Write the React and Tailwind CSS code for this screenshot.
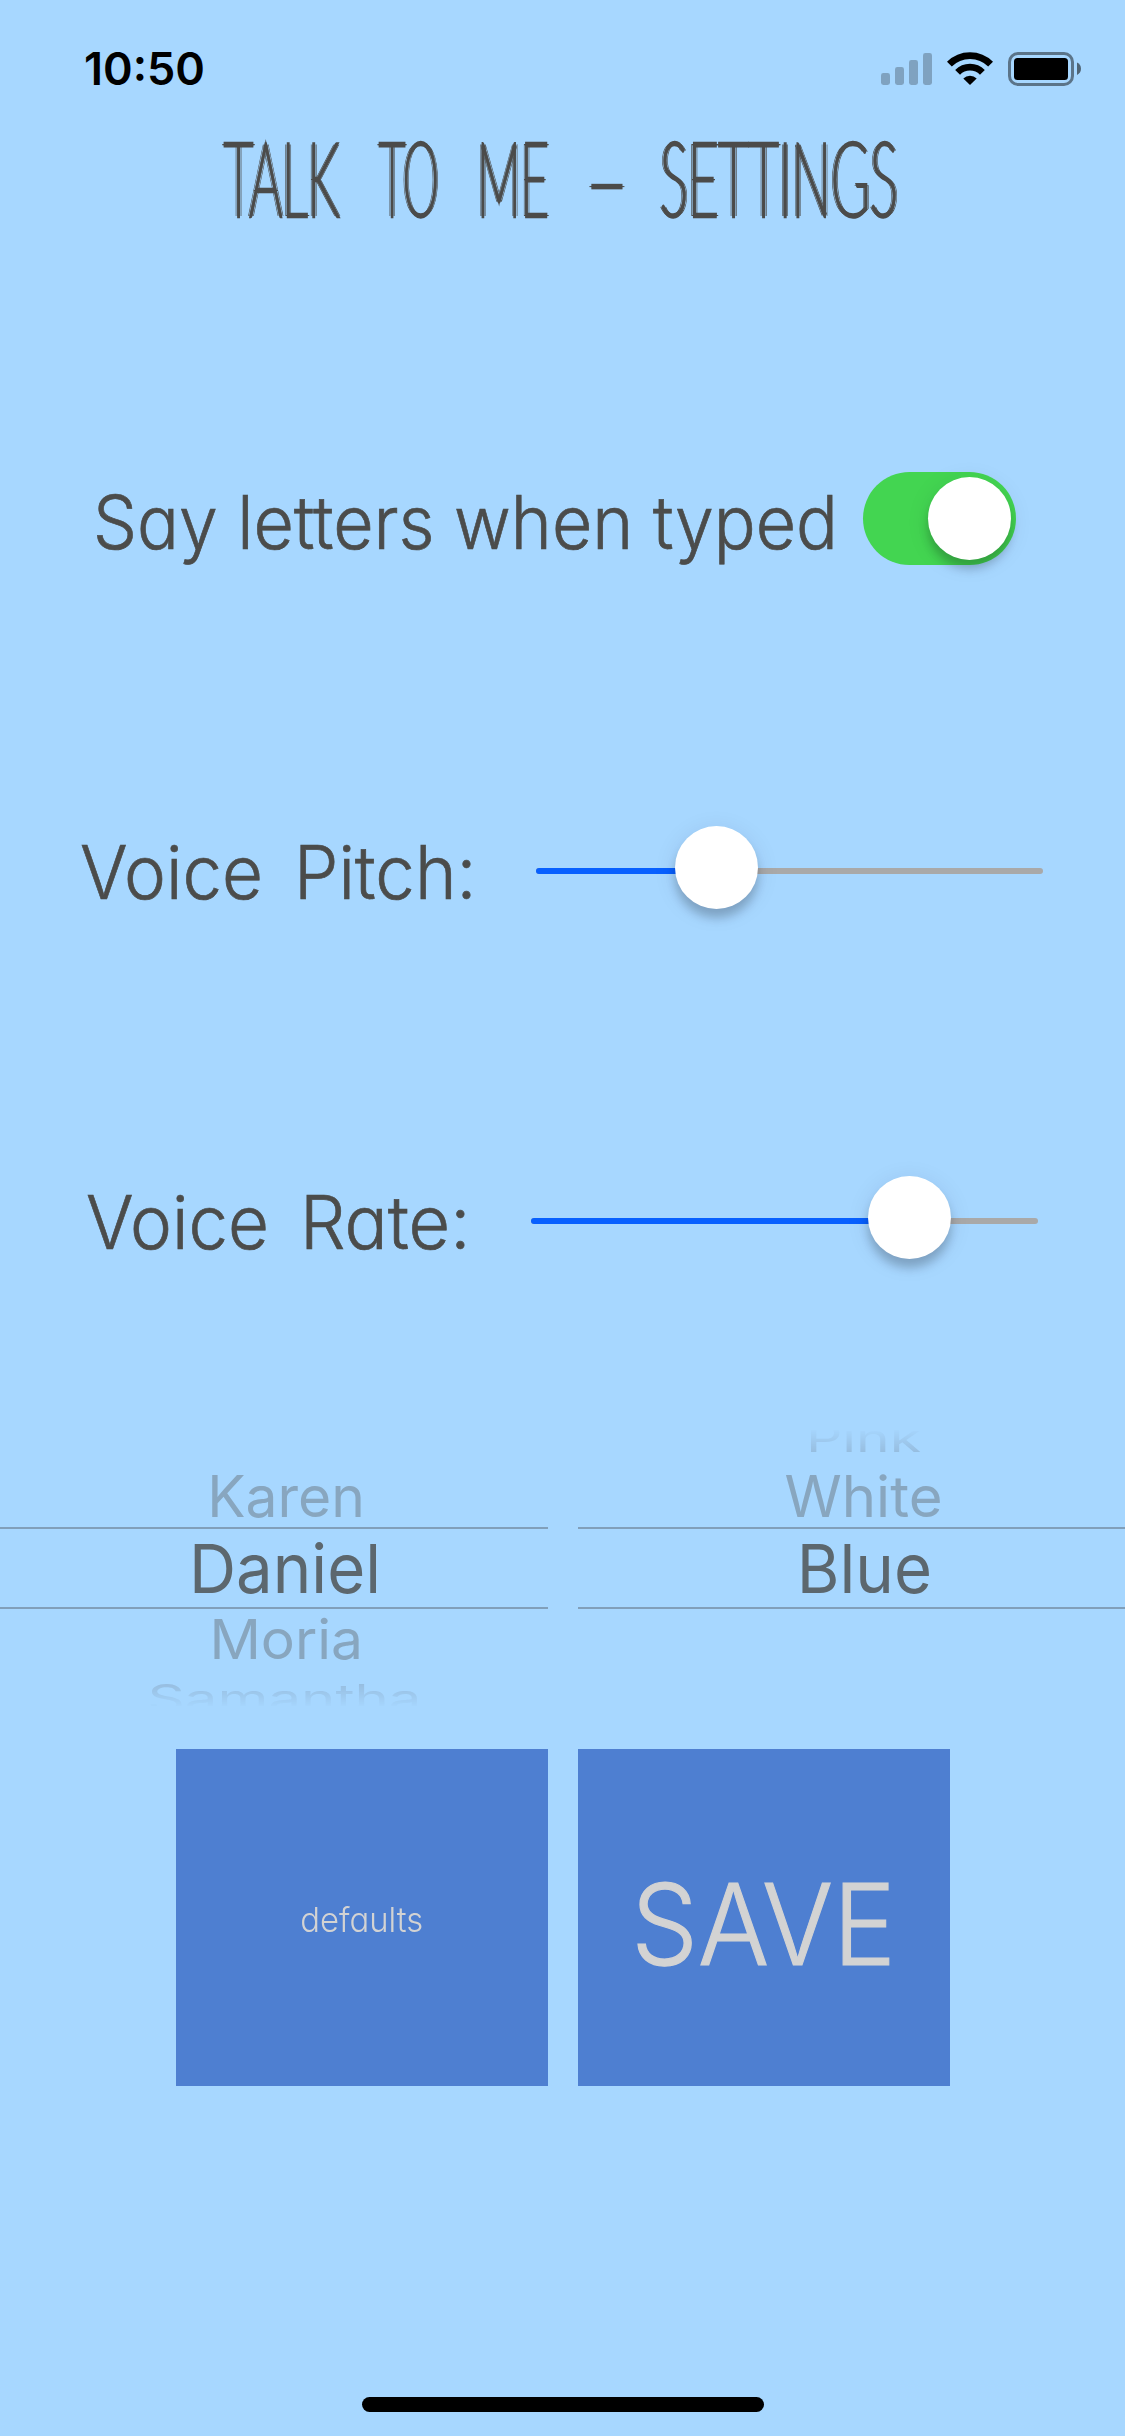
import React from "react";

function StatusBar() {
  return (
    <header className="flex h-[120px] shrink-0 items-start pl-[84px] pr-[44px]">
      <span className="mt-[49px] text-[45px] font-semibold leading-[40px] text-black">10:50</span>
      <div className="ml-auto mt-[52px] flex items-start">
        <svg className="h-[34px] w-[52px]" viewBox="0 0 52 34" fill="#7fa2c0" aria-label="Signal">
          <rect x="0" y="21" width="9" height="12" rx="2.4" />
          <rect x="14" y="15" width="9" height="18" rx="2.4" />
          <rect x="28" y="8" width="9" height="25" rx="2.4" />
          <rect x="42" y="1" width="9" height="32" rx="2.4" />
        </svg>
        <svg className="ml-[14px] h-[34px] w-[46px]" viewBox="0 0 46 34" aria-label="Wi-Fi">
          <g fill="none" stroke="#000" strokeWidth="6.8">
            <path d="M2.4 12.2a29 29 0 0 1 41.2 0" />
            <path d="M10.6 20.3a17.4 17.4 0 0 1 24.8 0" />
          </g>
          <path d="M23 33l-6.700-6.600a9.500 9.500 0 0 1 13.400 0z" fill="#000" />
        </svg>
        <svg className="ml-[15px] h-[34px] w-[73px]" viewBox="0 0 73 34" aria-label="Battery">
          <rect x="1.500" y="1.500" width="63" height="31" rx="8.500" fill="none" stroke="#5b7489" strokeWidth="3" />
          <rect x="6" y="6" width="54" height="22" rx="3.500" fill="#000" />
          <path d="M69 10.500c2.600 1.200 4 3.600 4 6.300s-1.400 5-4 6.200z" fill="#4f6475" />
        </svg>
      </div>
    </header>
  );
}

function Title() {
  const word = "inline-block origin-left whitespace-nowrap";
  return (
    <h1 className="flex h-[120px] shrink-0 items-start pl-[224px] font-['Lato'] text-[103px] font-thin leading-[113px] text-[#4b4b4a] [-webkit-text-stroke:4.5px_#4b4b4a] [stroke-linejoin:round] [text-shadow:-5px_0_#4b4b4a,-2.5px_0_#4b4b4a,2.5px_0_#4b4b4a,5px_0_#4b4b4a]">
      <span className="w-[155px]"><span className={`${word} scale-x-[0.495]`}>TALK</span></span>
      <span className="w-[98px]"><span className={`${word} scale-x-[0.445]`}>TO</span></span>
      <span className="w-[109px]"><span className={`${word} scale-x-[0.475]`}>ME</span></span>
      <span className="w-[74px]"><span className={`${word} scale-x-[0.7]`}>–</span></span>
      <span className="w-[240px]"><span className={`${word} scale-x-[0.512]`}>SETTINGS</span></span>
    </h1>
  );
}

function Knob({ className }) {
  return (
    <span
      className={`absolute h-[83px] w-[83px] rounded-full bg-white shadow-[0_9px_10px_rgba(0,0,0,0.2),0_4px_24px_rgba(0,0,60,0.09)] ${className}`}
    />
  );
}

function Slider({ fill, knob }) {
  return (
    <div className="relative mt-[56px] h-[6px] w-[507px] rounded-full bg-[#a9a9a9]">
      <div className={`h-full rounded-full bg-[#0860ff] ${fill}`} />
      <Knob className={`top-[-42px] ${knob}`} />
    </div>
  );
}

const row =
  "flex h-[120px] shrink-0 items-start text-[74px] font-light leading-[120px] [font-feature-settings:'cv11'] [-webkit-text-stroke:0.7px_#4b4c4b]";
const label = "inline-block origin-left whitespace-nowrap";
const near = "text-[#88a6bf]";

export default function App() {
  return (
    <main className="flex h-[2436px] w-[1125px] flex-col overflow-hidden bg-[#a7d7ff] font-['Inter',sans-serif] text-[#4b4c4b]">
      <StatusBar />
      <Title />

      <section className={`mt-[222px] pl-[93px] ${row}`}>
        <span className="w-[770px]">
          <span className={`${label} scale-x-[0.941]`}>Say letters when typed</span>
        </span>
        <div className="relative mt-[10px] h-[93px] w-[153px] rounded-full bg-[#43d551]">
          <Knob className="left-[65px] top-[5px]" />
        </div>
      </section>

      <section className={`mt-[230px] pl-[80px] ${row}`}>
        <span className="w-[214px]"><span className={`${label} scale-x-[0.955]`}>Voice</span></span>
        <span className="w-[242px]"><span className={`${label} scale-x-[0.955]`}>Pitch:</span></span>
        <Slider fill="w-[180px]" knob="left-[139px]" />
      </section>

      <section className={`mt-[230px] pl-[86px] ${row}`}>
        <span className="w-[214px]"><span className={`${label} scale-x-[0.955]`}>Voice</span></span>
        <span className="w-[231px]"><span className={`${label} scale-x-[0.97]`}>Rate:</span></span>
        <Slider fill="w-[380px]" knob="left-[337px]" />
      </section>

      <section className="mt-[148px] flex h-[276px] shrink-0 gap-[30px] text-center">
        <div className="flex w-[548px] flex-col">
          <div className="h-[30px]" />
          <div className={`h-[67px] pl-6 text-[57px] leading-[73px] ${near}`}>Karen</div>
          <div className="h-[82px] border-y-2 border-[#819fba] pl-[23px] text-[68px] leading-[78px] text-[#5c676e]">
            <span className="inline-block scale-x-[0.96]">Daniel</span>
          </div>
          <div className={`h-[67px] pl-6 text-[55px] leading-[61px] ${near}`}>
            <span className="inline-block scale-x-[1.035]">Moria</span>
          </div>
          <div className="h-[30px] overflow-hidden pl-[21px] text-[57px] leading-[57px] text-[#95bbdd] [mask-image:linear-gradient(to_bottom,black_20%,transparent_105%)]">
            <div className="mt-[3px] origin-top scale-x-[1.02] scale-y-[0.68]">Samantha</div>
          </div>
        </div>
        <div className="flex w-[547px] flex-col">
          <div className="h-[30px] overflow-hidden pl-[24px] text-[57px] leading-[57px] text-[#95bbdd] [mask-image:linear-gradient(to_top,black_20%,transparent_105%)]">
            <div className="mt-[-11px] origin-top scale-y-[0.68]">Pink</div>
          </div>
          <div className={`h-[67px] pl-6 text-[57px] leading-[73px] ${near}`}>
            <span className="inline-block scale-x-[1.02]">White</span>
          </div>
          <div className="h-[82px] border-y-2 border-[#819fba] pl-[26px] text-[68px] leading-[78px] text-[#5c676e]">
            <span className="inline-block scale-x-[0.96]">Blue</span>
          </div>
        </div>
      </section>

      <section className="mt-[43px] flex shrink-0 justify-center gap-[30px] font-light text-[#d3d3d3]">
        <button className="flex h-[337px] w-[372px] items-center justify-center bg-[#4e7fd1] pt-1 text-[34px] [font-feature-settings:'cv11']">
          <span className="inline-block scale-x-[0.965]">defaults</span>
        </button>
        <button className="flex h-[337px] w-[372px] items-center justify-center bg-[#4e7fd1] pt-[13px] text-[113px] leading-[120px] [-webkit-text-stroke:1.2px_#d3d3d3]">
          <span className="inline-block scale-x-[0.935]">SAVE</span>
        </button>
      </section>

      <div className="mb-[24px] mt-auto h-[15px] w-[402px] shrink-0 self-center rounded-full bg-black" />
    </main>
  );
}
